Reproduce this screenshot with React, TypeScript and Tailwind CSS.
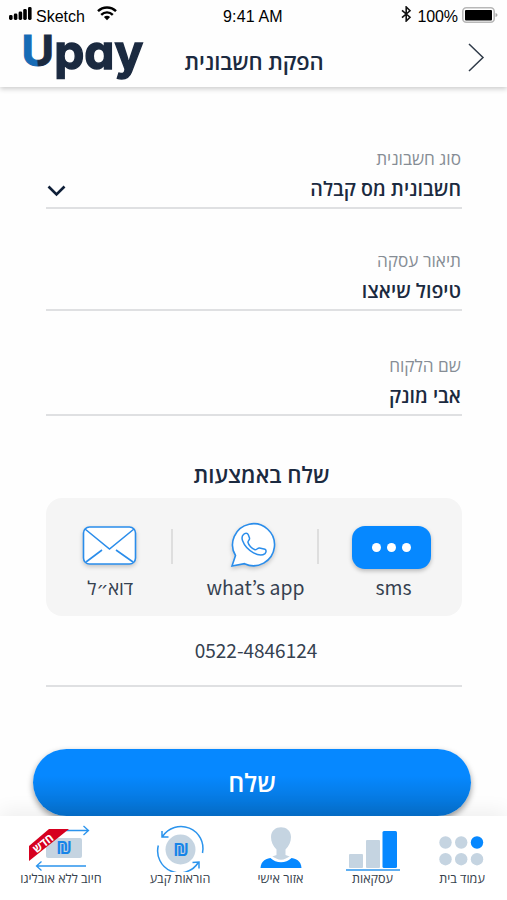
import React from "react";

const HEB = "font-['Open_Sans','Noto_Sans','DejaVu_Sans',sans-serif]";
const LAT = "font-['Noto_Sans_CJK_JP','Noto_Sans',sans-serif]";

function StatusBar() {
  return (
    <div className="flex h-8 shrink-0 items-center pt-px pl-[9px] pr-[9px] font-['Liberation_Sans',Arial,sans-serif] text-black">
      <div className="flex w-[200px] items-center">
        <svg width="24" height="14" viewBox="0 0 24 14" className="-mt-[5px]">
          <rect x="0" y="8" width="3.6" height="5" rx="1.4" />
          <rect x="4.8" y="6.5" width="3.6" height="6.5" rx="1.4" />
          <rect x="9.6" y="4.5" width="3.6" height="8.5" rx="1.4" />
          <rect x="14.2" y="2" width="3.6" height="11" rx="1.4" />
          <rect x="19" y="0" width="3.6" height="13" rx="1.4" />
        </svg>
        <span className="ml-[3px] text-[16px] leading-4">Sketch</span>
        <svg width="20" height="15" viewBox="0 0 20 15" className="-mt-[7px] ml-[12px]" fill="none" stroke="#000" strokeWidth="2.4">
          <path d="M1 5.2C6 .2 14 .2 19 5.2" />
          <path d="M4.2 8.8C7.5 5.5 12.5 5.5 15.8 8.8" />
          <path d="M6.9 11.1Q10 8.4 13.1 11.1L10 14.2Z" fill="#000" stroke="none" />
        </svg>
      </div>
      <span className="ml-[14px] w-[70px] whitespace-nowrap text-[16px] leading-4 tracking-[0.15px]">9:41 AM</span>
      <div className="ml-auto flex items-center">
        <svg width="11" height="16" viewBox="0 0 11 16" className="-mt-[6px]" fill="none" stroke="#111" strokeWidth="1.6">
          <path d="M1 4.3L9 11.2L5.2 15V1L9 4.8L1 11.7" />
        </svg>
        <span className="ml-[5px] text-[16px] leading-4 tracking-[-0.1px]">100%</span>
        <svg width="36" height="18" viewBox="0 0 36 18" className="-mt-[4px] ml-[4px]">
          <rect x=".8" y="1.8" width="31.4" height="14.4" rx="3.5" fill="#fff" stroke="#b8b8b8" strokeWidth="1.6" />
          <rect x="3" y="4" width="27" height="10.5" rx="1" />
          <path d="M33.5 7v4q2-.5 2-2t-2-2" fill="#aaa" />
        </svg>
      </div>
    </div>
  );
}

function Logo() {
  return (
    <svg width="130" height="54" viewBox="0 0 130 54" className="overflow-visible font-['Inter',sans-serif] font-bold [font-feature-settings:'cv11']">
      <defs>
        <linearGradient id="u" gradientUnits="userSpaceOnUse" x1="0" y1="4" x2="30" y2="0">
          <stop offset=".36" stopColor="#176bb5" />
          <stop offset=".42" stopColor="#1b2a40" />
        </linearGradient>
      </defs>
      <text x="-0.500" y="34" fontSize="43" fill="url(#u)" stroke="url(#u)" strokeWidth="1" textLength="32.500" lengthAdjust="spacingAndGlyphs">U</text>
      <text transform="translate(0 36.500) scale(1 1.18)" x="32.200" y="0" fontSize="41" fill="#1b2a40" stroke="#1b2a40" strokeWidth="1.2" textLength="89" lengthAdjust="spacingAndGlyphs">pay</text>
    </svg>
  );
}

function Header() {
  return (
    <header className="flex h-[55px] shrink-0 pl-[22px] pr-[22px] shadow-[0_2px_5px_rgba(0,0,0,0.2)] [clip-path:inset(0_0_-12px_0)]">
      <Logo />
      <h1 dir="rtl" className={`${HEB} mt-[15px] ml-[32px] w-[140px] whitespace-nowrap text-center text-[22px] leading-7 font-semibold tracking-[-0.1px] text-[#1b2a40]`}>
        הפקת חשבונית
      </h1>
      <svg width="18" height="30" viewBox="0 0 18 30" className="ml-auto mt-[11px]" fill="none" stroke="#303b49" strokeWidth="1.5">
        <path d="M2 1L16 14.5L2 28" />
      </svg>
    </header>
  );
}

function Field({ label, value, select }: { label: string; value: string; select?: boolean }) {
  return (
    <div className="h-[61px] border-b-2 border-[#dfe0e2]">
      <div dir="rtl" className={`${HEB} h-[25px] pr-px text-[17.2px] leading-[22px] text-[#868d95]`}>{label}</div>
      <div className="flex h-[32px] items-center justify-between pr-px">
        <span className="pt-[4px]">
          {select && (
            <svg width="20" height="12" viewBox="0 0 20 12" fill="none" stroke="#0f1f38" strokeWidth="2.6" className="ml-px">
              <path d="M1.5 1.5L9.5 9.5L17.5 1.5" />
            </svg>
          )}
        </span>
        <span dir="rtl" className={`${HEB} text-[19.6px] leading-8 font-semibold text-[#1b2a40]`}>{value}</span>
      </div>
    </div>
  );
}

function Channels() {
  return (
    <div className="flex h-[118px] shrink-0 rounded-2xl bg-[#f5f5f5] text-[#354150]">
      <div className="flex w-[125px] flex-col items-center pt-[26px] pl-[3px]">
        <svg width="56" height="44" viewBox="0 0 56 44" fill="none" stroke="#2a8deb" strokeWidth="1.6" className="drop-shadow-[0_2px_2px_rgba(0,0,0,0.2)]">
          <rect x="1.5" y="3" width="52" height="37" rx="6" fill="#fff" />
          <path d="M3 5L27.500 25L52 5M4 38L20 26M51 38L34 26" />
        </svg>
        <div dir="rtl" className={`${HEB} mt-[8px] text-[19px] leading-6 tracking-[-0.3px]`}>דוא״ל</div>
      </div>
      <div className="mt-[31px] h-[35px] w-[2px] bg-[#dedede]" />
      <div className="flex w-[144px] flex-col items-center pt-[23px] pl-[21px]">
        <svg width="48" height="48" viewBox="0 0 48 48" fill="none" stroke="#2a8deb" strokeWidth="1.6" className="-ml-[6px] drop-shadow-[0_2px_2px_rgba(0,0,0,0.2)]">
          <path fill="#fff" d="M3 45L6.500 34.500A21 21 0 1 1 15.500 42.700Z" />
          <path strokeWidth="1.5" d="M14.500 13.500C16 11.800 18.500 11.800 19.300 13.700L20.500 17C21 18.600 19 19.700 18.900 21.200C19.500 24.200 23 27.700 26 28.800C27.500 29.300 28.500 26.800 30.500 27L36 28.200C37.600 28.800 37.200 31.400 36 32.600C33 35 28.500 34 24.500 31.800C19.500 29 15.300 24.500 13.500 19.500C12.700 17.200 13 15 14.500 13.500Z" />
        </svg>
        <div className={`${LAT} mt-[4px] whitespace-nowrap text-[19.4px] leading-7`}>what’s app</div>
      </div>
      <div className="mt-[31px] h-[35px] w-[2px] bg-[#dedede]" />
      <div className="flex w-[142px] flex-col items-center pt-[28px] pl-[3px]">
        <div className="flex h-[43px] w-[79px] items-center justify-center gap-[6px] rounded-[13px] bg-[#0688ff] shadow-[0_2px_4px_rgba(0,0,0,0.25)]">
          <i className="size-[9px] rounded-full bg-white" />
          <i className="size-[9px] rounded-full bg-white" />
          <i className="size-[9px] rounded-full bg-white" />
        </div>
        <div className={`${LAT} mt-[4px] pl-[4px] text-[19.4px] leading-7`}>sms</div>
      </div>
    </div>
  );
}

function NavItem({ label, className, children }: { label: string; className: string; children: React.ReactNode }) {
  return (
    <div className={`flex flex-col items-center pt-[8px] ${className}`}>
      {children}
      <div dir="rtl" className={`${HEB} -mt-px whitespace-nowrap text-[12.6px] leading-4 text-[#35414c]`}>{label}</div>
    </div>
  );
}

function BottomNav() {
  return (
    <nav className="relative flex h-[84px] shrink-0 bg-white pl-[1px] shadow-[0_-6px_18px_rgba(0,0,0,0.06)]">
      <NavItem label="חיוב ללא אובליגו" className="w-[120px]">
        <svg width="66" height="48" viewBox="0 0 66 48" className="font-['Open_Sans','DejaVu_Sans',sans-serif]">
          <rect x="18" y="14" width="36" height="20" rx="2" fill="#c5d4e1" />
          <path d="M38 6.500H60M55.500 2L60.500 6.500L55.500 11M58 42H9M13.500 37.500L8.500 42L13.500 46.500" fill="none" stroke="#2b94ed" strokeWidth="1.3" />
          <path d="M21 5H41L1 37V22Z" fill="#d6001f" />
          <text x="36" y="30" textAnchor="middle" fontSize="17" fontWeight="700" fill="#1684e8">₪</text>
          <text transform="translate(17.500 22.500) rotate(-38)" textAnchor="middle" fontSize="11.500" fontWeight="700" fill="#fff">חדש</text>
        </svg>
      </NavItem>
      <NavItem label="הוראות קבע" className="w-[118px]">
        <svg width="50" height="48" viewBox="0 0 50 48" className="font-['Open_Sans','DejaVu_Sans',sans-serif]">
          <circle cx="25.500" cy="25.500" r="15" fill="#c5d4e1" />
          <g fill="none" stroke="#2b94ed" strokeWidth="1.5">
            <path d="M47.500 29A22 22 0 0 0 7.500 12.500M7 7V13H13.500" />
            <path d="M3.300 21.500A22 22 0 0 0 43 39M37.500 38.500L44 38V44.500" />
          </g>
          <text x="26" y="32" textAnchor="middle" fontSize="17" fontWeight="700" fill="#1684e8">₪</text>
        </svg>
      </NavItem>
      <NavItem label="אזור אישי" className="w-[83px]">
        <svg width="44" height="48" viewBox="0 0 44 48">
          <path d="M1.500 44C2 36.500 7 34.500 14 33.500H30C37 34.500 42 36.500 42.500 44Z" fill="#0688ff" />
          <path d="M12 33L17.500 31V25.500C14 22 12 18 12 13C12 0 32 0 32 13C32 18 30 22 26.500 25.500V31L32 33C29 38 15 38 12 33Z" fill="#c5d4e1" />
          <path d="M11.500 32.500Q22 41.500 32.500 32.500" fill="none" stroke="#fff" strokeWidth="2.500" />
        </svg>
      </NavItem>
      <NavItem label="עסקאות" className="w-[101px]">
        <svg width="54" height="48" viewBox="0 0 54 48">
          <rect x="3" y="30" width="14" height="14" rx="1" fill="#c5d4e1" />
          <rect x="20" y="16" width="14" height="28" rx="1" fill="#c5d4e1" />
          <rect x="36.500" y="7" width="14.500" height="37" rx="1.500" fill="#0688ff" />
          <path d="M0 46H54" stroke="#2b94ed" strokeWidth="1.600" />
        </svg>
      </NavItem>
      <NavItem label="עמוד בית" className="w-[78px]">
        <svg width="46" height="48" viewBox="0 0 46 48" fill="#c5d4e1">
          <circle cx="6.500" cy="18.500" r="6.200" />
          <circle cx="22.200" cy="18.500" r="6.200" />
          <circle cx="38" cy="18.500" r="6.200" fill="#0688ff" />
          <circle cx="6.500" cy="35.200" r="6.200" />
          <circle cx="22.200" cy="35.200" r="6.200" />
          <circle cx="38" cy="35.200" r="6.200" />
        </svg>
      </NavItem>
    </nav>
  );
}

export default function App() {
  return (
    <div className="flex h-[900px] w-[507px] flex-col overflow-hidden bg-[#fefefe]">
      <StatusBar />
      <Header />
      <main className="flex flex-1 flex-col pl-[46px] pr-[45px] pt-[61px]">
        <Field label="סוג חשבונית" value="חשבונית מס קבלה" select />
        <div className="h-[41px]" />
        <Field label="תיאור עסקה" value="טיפול שיאצו" />
        <div className="h-[44px]" />
        <Field label="שם הלקוח" value="אבי מונק" />
        <h2 dir="rtl" className={`${HEB} mt-[43px] mb-[7px] pl-[15px] text-center text-[22.2px] leading-8 font-semibold text-[#1b2a40]`}>
          שלח באמצעות
        </h2>
        <Channels />
        <div className={`${LAT} mt-[18px] h-[53px] border-b-2 border-[#dfe0e2] pl-[4px] text-center text-[19px] leading-[32px] text-[#354150]`}>0522-4846124</div>
        <button className={`${HEB} -ml-[13px] -mr-[9px] mt-[62px] h-[67px] shrink-0 rounded-full bg-gradient-to-b from-[#0688ff] from-40% to-[#0670cd] text-[25px] font-semibold text-white shadow-[0_3px_6px_rgba(0,0,0,0.4)]`}>
          שלח
        </button>
      </main>
      <BottomNav />
    </div>
  );
}
